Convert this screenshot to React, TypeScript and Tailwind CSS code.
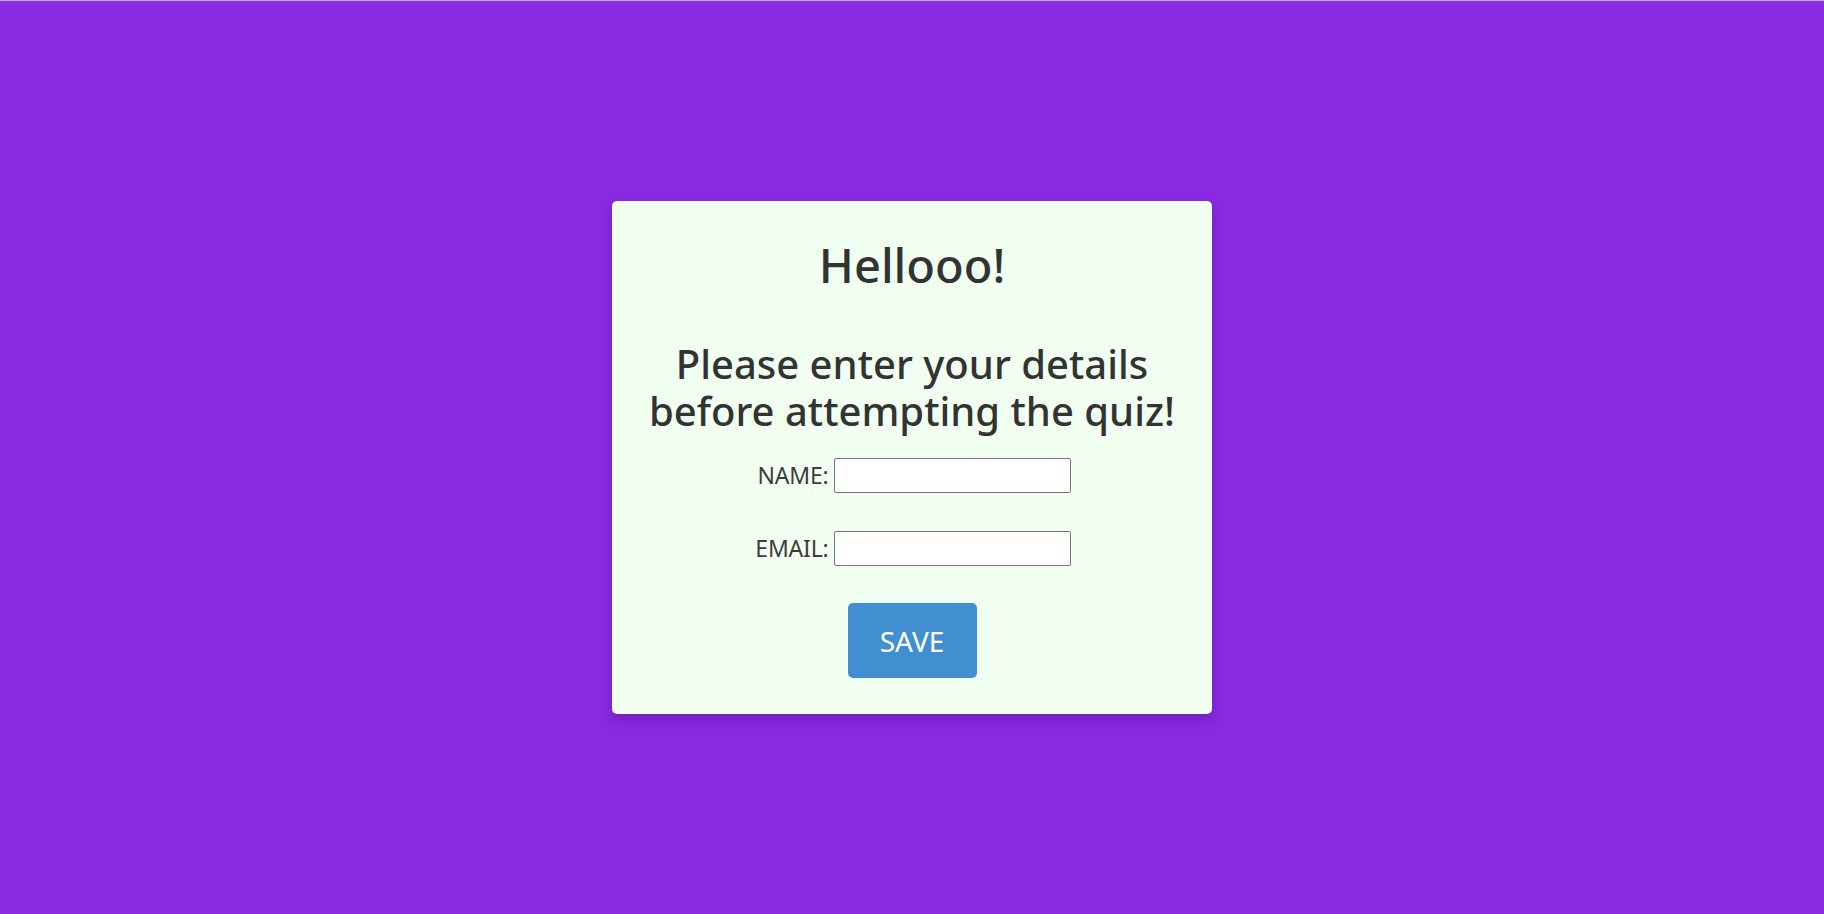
export default function App() {
  return (
    <div
      className="flex min-h-[914px] w-full items-center justify-center border-t border-[#b4b4b4] bg-[#8a2be2]"
      style={{ fontFamily: "'Noto Sans', 'Open Sans', sans-serif" }}
    >
      <div className="flex h-[513px] w-[600px] flex-col items-center rounded-[5px] bg-[#f0fff0] pt-[34px] text-[#333333] shadow-[0_6px_14px_rgba(60,0,110,0.35)]">
        <h1 className="text-[47px] font-medium leading-[60px]">Hellooo!</h1>
        <h2 className="mt-[45px] text-center text-[40px] font-medium leading-[47px]">
          Please enter your details
          <br />
          before attempting the quiz!
        </h2>
        <form className="mt-[24px] flex flex-col items-center">
          <div className="flex items-center gap-[5px]">
            <label htmlFor="name" className="w-[75px] text-right text-[23px] tracking-[-0.2px] text-[#3d3d3d]">
              NAME:
            </label>
            <input
              id="name"
              type="text"
              className="h-[35px] w-[237px] rounded-[2px] border border-[#767676] bg-white"
            />
          </div>
          <div className="mt-[38px] flex items-center gap-[5px]">
            <label htmlFor="email" className="w-[75px] text-right text-[23px] tracking-[-0.2px] text-[#3d3d3d]">
              EMAIL:
            </label>
            <input
              id="email"
              type="email"
              className="h-[35px] w-[237px] rounded-[2px] border border-[#767676] bg-white"
            />
          </div>
          <button
            type="button"
            className="mt-[37px] flex h-[75px] w-[129px] items-center justify-center rounded-[5px] bg-[#418fd0] text-[28px] text-white"
          >
            SAVE
          </button>
        </form>
      </div>
    </div>
  );
}
